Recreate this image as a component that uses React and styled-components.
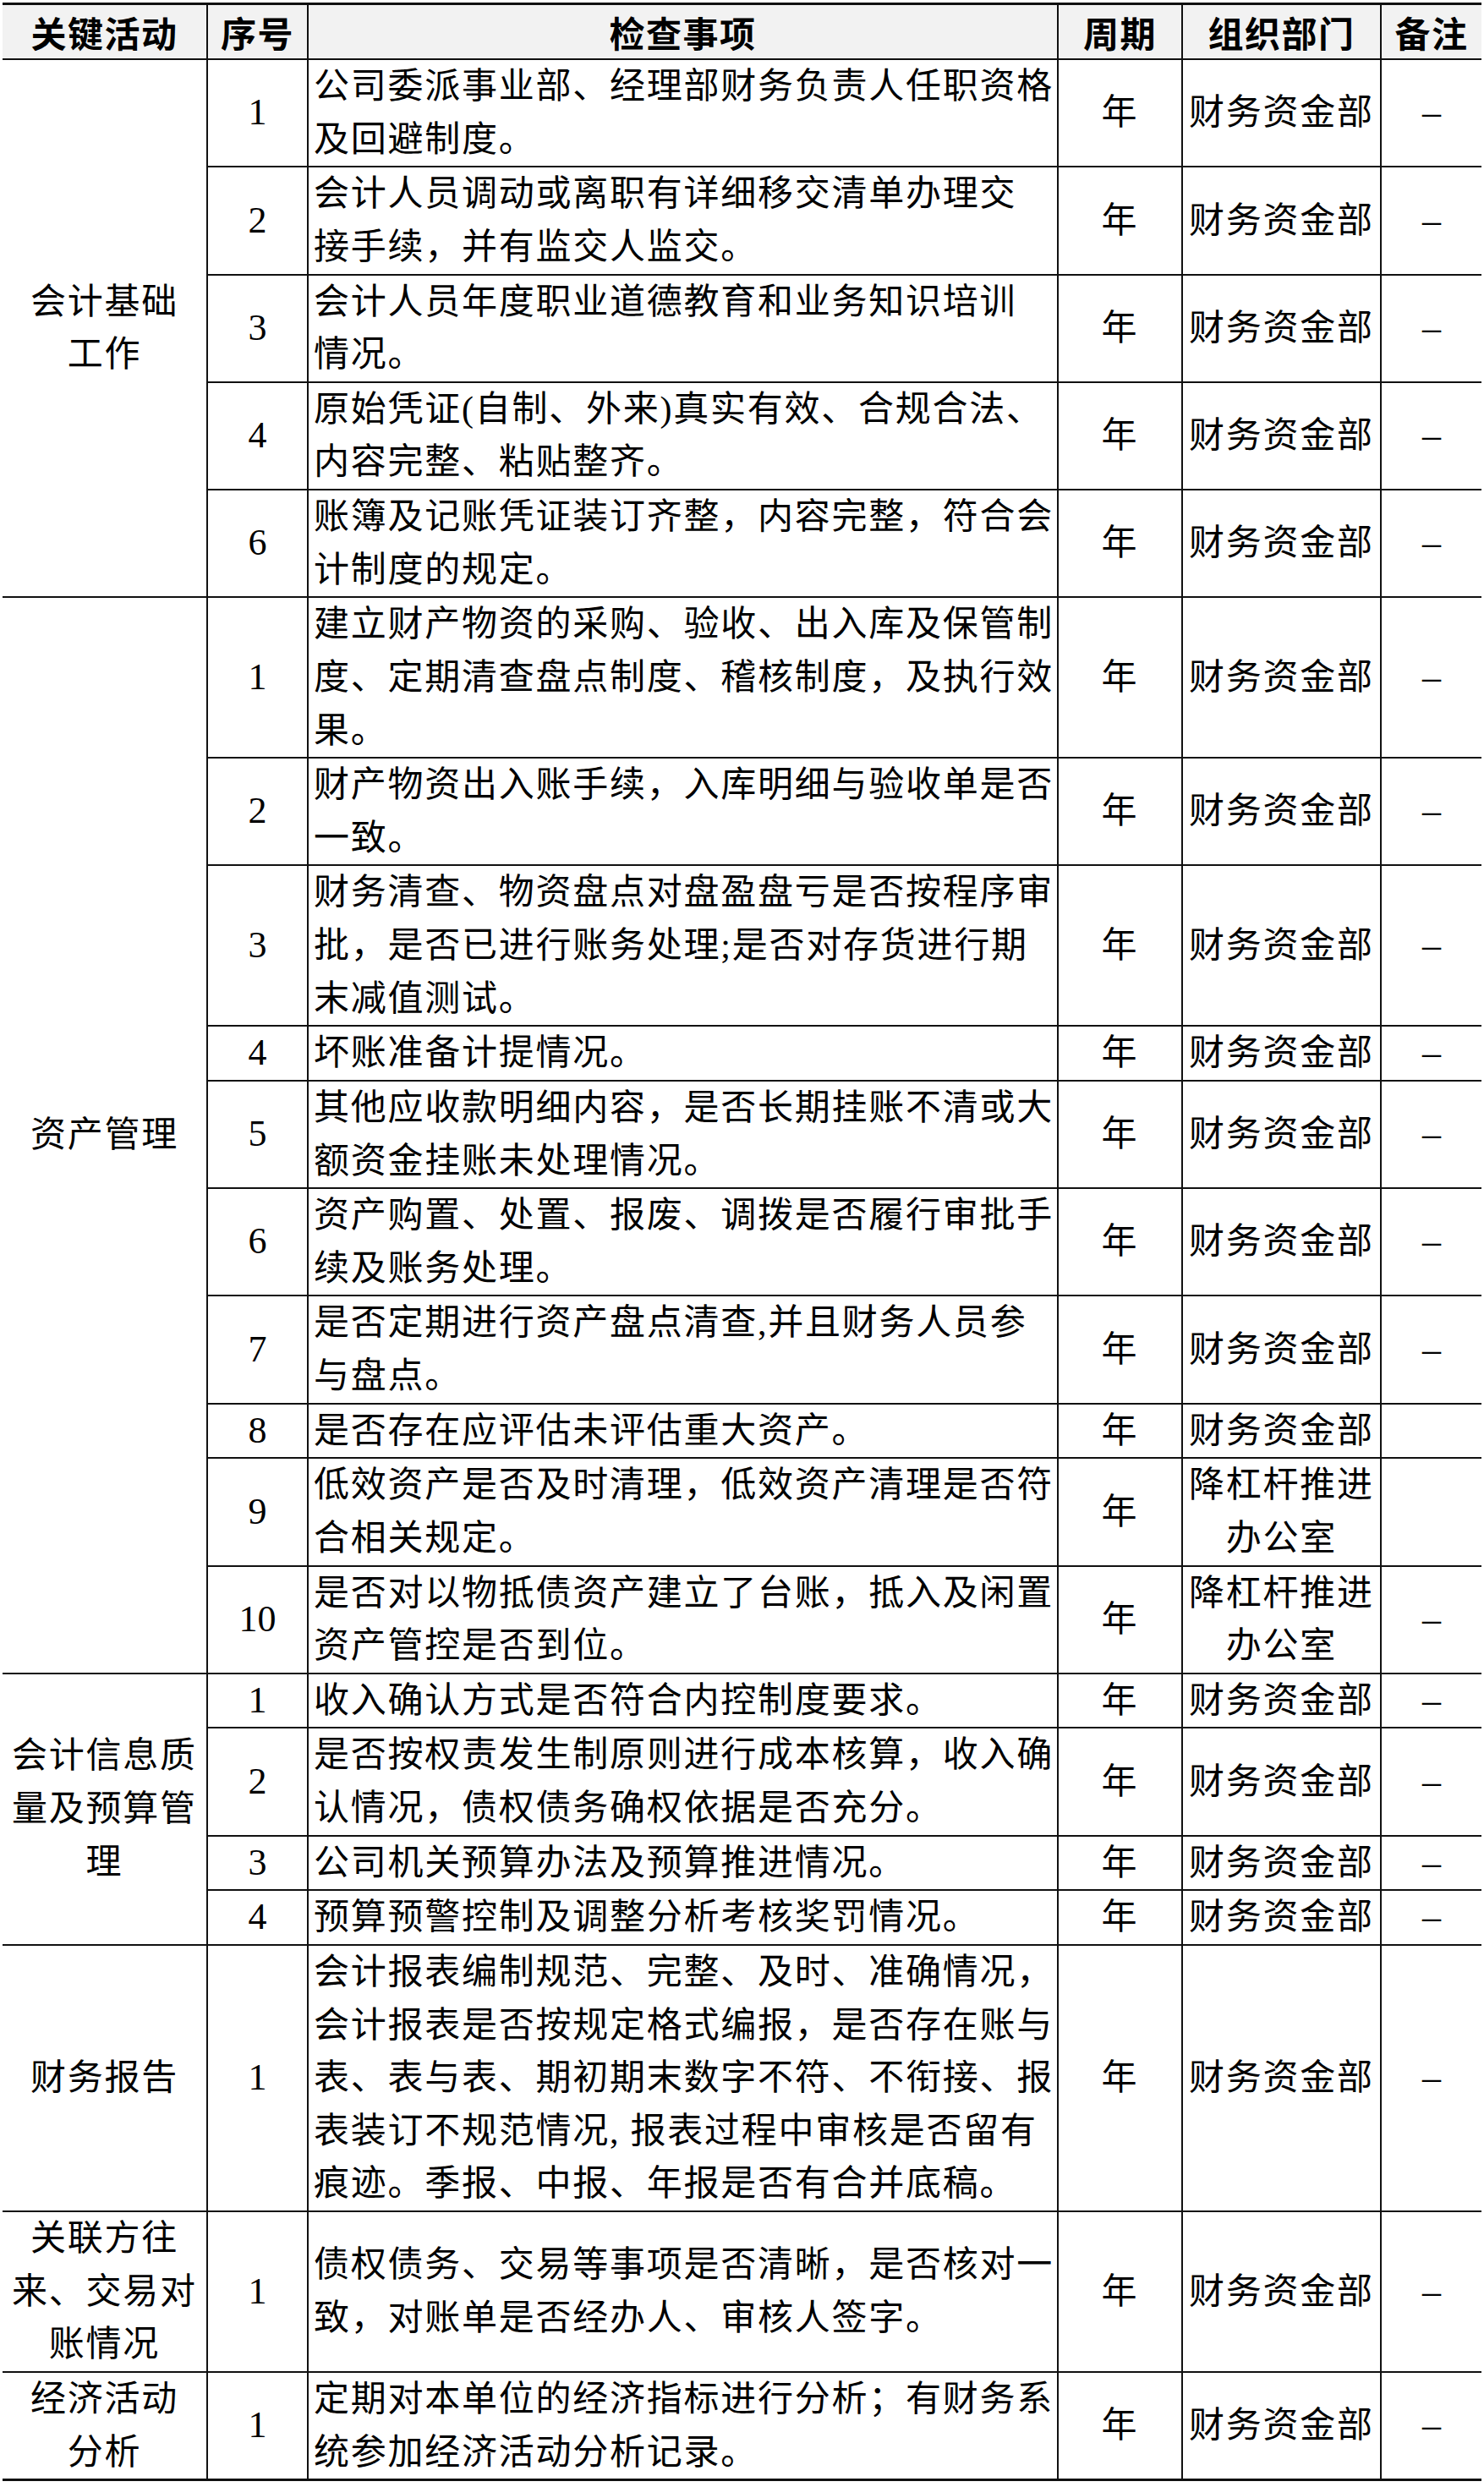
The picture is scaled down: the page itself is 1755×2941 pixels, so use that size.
import React from 'react';
import styled, {createGlobalStyle} from 'styled-components';

const GlobalStyle = createGlobalStyle`
  html, body {
    margin: 0;
    padding: 0;
    background: #fff;
  }
  body {
    font-family: "Liberation Serif", "Noto Sans CJK SC", serif;
    color: #000;
  }
`;

const Sheet = styled.table`
  width: 1749px;
  margin: 3px 0 0 3px;
  border-collapse: collapse;
  table-layout: fixed;
  border-top: 3px solid #111;
  border-bottom: 3px solid #111;
`;

const HeadCell = styled.th`
  height: 63px;
  padding: 0;
  background: #f2f2f2;
  font-family: "Noto Sans CJK SC", sans-serif;
  font-size: 42px;
  font-weight: 700;
  line-height: 63px;
  letter-spacing: 1.5px;
  text-align: center;
  border-left: ${(p) => (p.$first ? 'none' : '2px solid #111')};
  border-bottom: 2px solid #111;
`;

const Cell = styled.td`
  padding: ${(p) => (p.$text ? '0 2px 0 6px' : '0')};
  font-size: ${(p) => (p.$num ? '44px' : '42px')};
  line-height: 62.62px;
  letter-spacing: ${(p) => (p.$num ? '0' : '1.75px')};
  text-align: ${(p) => (p.$text ? 'left' : 'center')};
  vertical-align: middle;
  white-space: pre;
  border-left: ${(p) => (p.$first ? 'none' : '2px solid #111')};
  border-bottom: 2px solid #111;
`;

const groups = [
  {
    title: '会计基础\n工作',
    rows: [
      {no: '1', text: '公司委派事业部、经理部财务负责人任职资格\n及回避制度。'},
      {no: '2', text: '会计人员调动或离职有详细移交清单办理交\n接手续，并有监交人监交。'},
      {no: '3', text: '会计人员年度职业道德教育和业务知识培训\n情况。'},
      {no: '4', text: '原始凭证(自制、外来)真实有效、合规合法、\n内容完整、粘贴整齐。'},
      {no: '6', text: '账簿及记账凭证装订齐整，内容完整，符合会\n计制度的规定。'},
    ],
  },
  {
    title: '资产管理',
    rows: [
      {no: '1', text: '建立财产物资的采购、验收、出入库及保管制\n度、定期清查盘点制度、稽核制度，及执行效\n果。'},
      {no: '2', text: '财产物资出入账手续，入库明细与验收单是否\n一致。'},
      {no: '3', text: '财务清查、物资盘点对盘盈盘亏是否按程序审\n批，是否已进行账务处理;是否对存货进行期\n末减值测试。'},
      {no: '4', text: '坏账准备计提情况。'},
      {no: '5', text: '其他应收款明细内容，是否长期挂账不清或大\n额资金挂账未处理情况。'},
      {no: '6', text: '资产购置、处置、报废、调拨是否履行审批手\n续及账务处理。'},
      {no: '7', text: '是否定期进行资产盘点清查,并且财务人员参\n与盘点。'},
      {no: '8', text: '是否存在应评估未评估重大资产。', note: ''},
      {no: '9', text: '低效资产是否及时清理，低效资产清理是否符\n合相关规定。', dept: '降杠杆推进\n办公室', note: ''},
      {no: '10', text: '是否对以物抵债资产建立了台账，抵入及闲置\n资产管控是否到位。', dept: '降杠杆推进\n办公室'},
    ],
  },
  {
    title: '会计信息质\n量及预算管\n理',
    rows: [
      {no: '1', text: '收入确认方式是否符合内控制度要求。'},
      {no: '2', text: '是否按权责发生制原则进行成本核算，收入确\n认情况，债权债务确权依据是否充分。'},
      {no: '3', text: '公司机关预算办法及预算推进情况。'},
      {no: '4', text: '预算预警控制及调整分析考核奖罚情况。'},
    ],
  },
  {
    title: '财务报告',
    rows: [
      {
        no: '1',
        text: '会计报表编制规范、完整、及时、准确情况，\n会计报表是否按规定格式编报，是否存在账与\n表、表与表、期初期末数字不符、不衔接、报\n表装订不规范情况, 报表过程中审核是否留有\n痕迹。季报、中报、年报是否有合并底稿。',
      },
    ],
  },
  {
    title: '关联方往\n来、交易对\n账情况',
    rows: [{no: '1', text: '债权债务、交易等事项是否清晰，是否核对一\n致，对账单是否经办人、审核人签字。'}],
  },
  {
    title: '经济活动\n分析',
    rows: [{no: '1', text: '定期对本单位的经济指标进行分析；有财务系\n统参加经济活动分析记录。'}],
  },
];

const headers = ['关键活动', '序号', '检查事项', '周期', '组织部门', '备注'];
const widths = [242, 119, 887, 147, 235, 119];

function App() {
  return (
    <>
      <GlobalStyle />
      <Sheet>
        <colgroup>
          {widths.map((w, i) => (
            <col key={i} style={{width: w}} />
          ))}
        </colgroup>
        <thead>
          <tr>
            {headers.map((h, i) => (
              <HeadCell key={h} $first={i === 0}>
                {h}
              </HeadCell>
            ))}
          </tr>
        </thead>
        <tbody>
          {groups.map((g) =>
            g.rows.map((r, i) => (
              <tr key={g.title + r.no}>
                {i === 0 && (
                  <Cell $first rowSpan={g.rows.length}>
                    {g.title}
                  </Cell>
                )}
                <Cell $num>{r.no}</Cell>
                <Cell $text>{r.text}</Cell>
                <Cell>年</Cell>
                <Cell>{r.dept ?? '财务资金部'}</Cell>
                <Cell $num>{r.note ?? '–'}</Cell>
              </tr>
            ))
          )}
        </tbody>
      </Sheet>
    </>
  );
}

export default App;
